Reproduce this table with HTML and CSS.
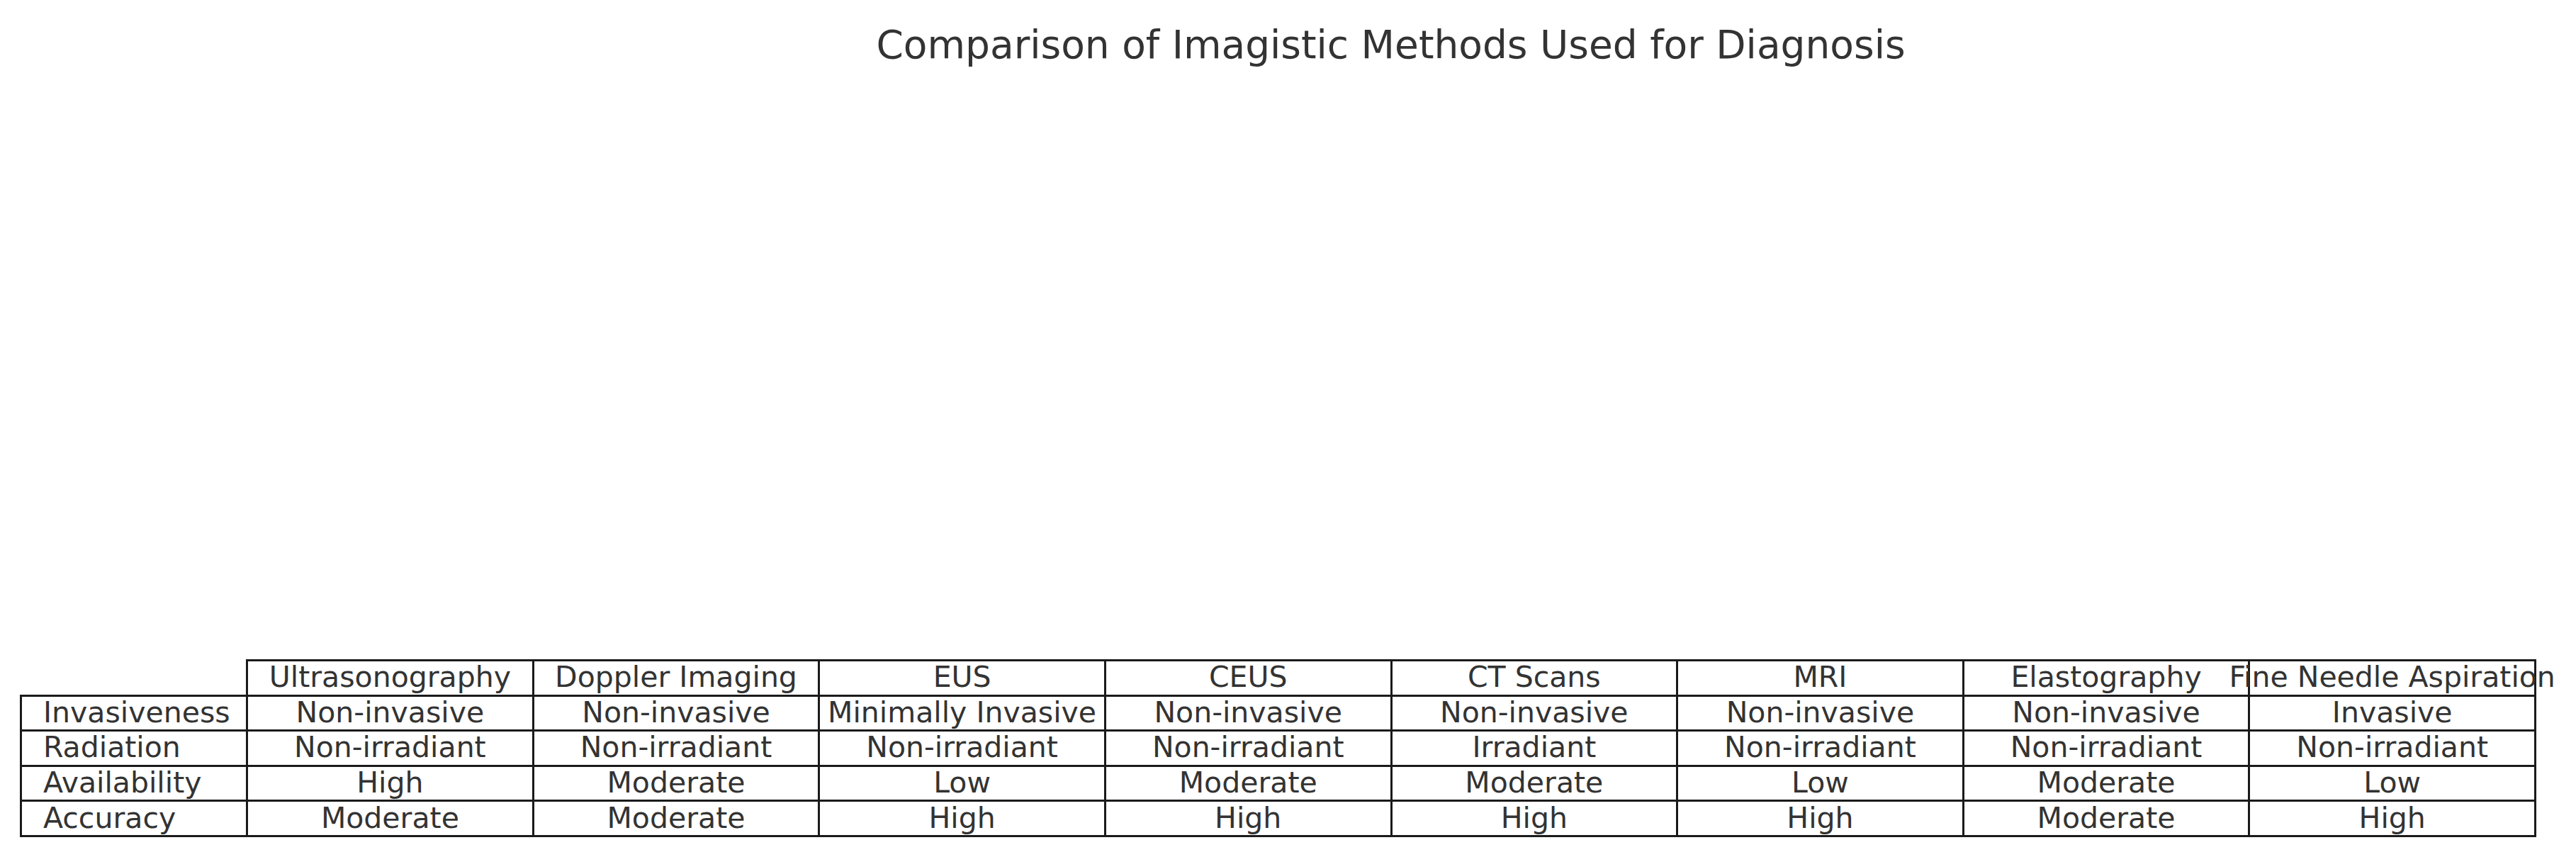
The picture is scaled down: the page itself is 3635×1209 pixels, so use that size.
FILE: index.html
```html
<!DOCTYPE html>
<html lang="en">
<head>
<meta charset="utf-8">
<title>Comparison of Imagistic Methods Used for Diagnosis</title>
<link rel="stylesheet" href="styles.css">
</head>
<body>
<div class="figure">
  <h1 class="title">Comparison of Imagistic Methods Used for Diagnosis</h1>
  <div class="plot-area"></div>
  <table class="data-table">
    <colgroup>
      <col class="label-col">
      <col class="data-col"><col class="data-col"><col class="data-col"><col class="data-col">
      <col class="data-col"><col class="data-col"><col class="data-col"><col class="data-col">
    </colgroup>
    <tr class="head-row">
      <td class="corner"></td>
      <td><div class="c">Ultrasonography</div></td>
      <td><div class="c">Doppler Imaging</div></td>
      <td><div class="c">EUS</div></td>
      <td><div class="c">CEUS</div></td>
      <td><div class="c">CT Scans</div></td>
      <td><div class="c">MRI</div></td>
      <td><div class="c">Elastography</div></td>
      <td><div class="c">Fine Needle Aspiration</div></td>
    </tr>
    <tr>
      <td class="row-label"><div class="l">Invasiveness</div></td>
      <td><div class="c">Non-invasive</div></td>
      <td><div class="c">Non-invasive</div></td>
      <td><div class="c">Minimally Invasive</div></td>
      <td><div class="c">Non-invasive</div></td>
      <td><div class="c">Non-invasive</div></td>
      <td><div class="c">Non-invasive</div></td>
      <td><div class="c">Non-invasive</div></td>
      <td><div class="c">Invasive</div></td>
    </tr>
    <tr>
      <td class="row-label"><div class="l">Radiation</div></td>
      <td><div class="c">Non-irradiant</div></td>
      <td><div class="c">Non-irradiant</div></td>
      <td><div class="c">Non-irradiant</div></td>
      <td><div class="c">Non-irradiant</div></td>
      <td><div class="c">Irradiant</div></td>
      <td><div class="c">Non-irradiant</div></td>
      <td><div class="c">Non-irradiant</div></td>
      <td><div class="c">Non-irradiant</div></td>
    </tr>
    <tr>
      <td class="row-label"><div class="l">Availability</div></td>
      <td><div class="c">High</div></td>
      <td><div class="c">Moderate</div></td>
      <td><div class="c">Low</div></td>
      <td><div class="c">Moderate</div></td>
      <td><div class="c">Moderate</div></td>
      <td><div class="c">Low</div></td>
      <td><div class="c">Moderate</div></td>
      <td><div class="c">Low</div></td>
    </tr>
    <tr>
      <td class="row-label"><div class="l">Accuracy</div></td>
      <td><div class="c">Moderate</div></td>
      <td><div class="c">Moderate</div></td>
      <td><div class="c">High</div></td>
      <td><div class="c">High</div></td>
      <td><div class="c">High</div></td>
      <td><div class="c">High</div></td>
      <td><div class="c">Moderate</div></td>
      <td><div class="c">High</div></td>
    </tr>
  </table>
</div>
</body>
</html>
```
FILE: styles.css
```css
html, body {
  margin: 0;
  padding: 0;
  background: #ffffff;
}
body {
  font-family: "DejaVu Sans", "Liberation Sans", sans-serif;
  color: #333333;
}
.figure {
  width: 3635px;
  height: 1209px;
  display: flex;
  flex-direction: column;
}
.title {
  margin: 0;
  padding-top: 31px;
  padding-left: 290px;
  font-size: 55px;
  font-weight: normal;
  line-height: 64px;
  text-align: center;
  white-space: nowrap;
}
.plot-area {
  height: 835px;
  flex: none;
}
.data-table {
  margin-left: 28px;
  border-collapse: collapse;
  table-layout: fixed;
  width: 3551px;
  font-size: 41px;
}
.label-col { width: 319px; }
.data-col { width: 403.5px; }
.data-table tr {
  height: 49.6px;
}
.data-table td {
  border: 3px solid #1a1a1a;
  padding: 0;
  overflow: visible;
  white-space: nowrap;
}
.data-table td.corner {
  border: none;
}
.c {
  display: flex;
  justify-content: center;
  line-height: 44px;
  padding-bottom: 2px;
}
.l {
  display: flex;
  justify-content: flex-start;
  padding-left: 30px;
  line-height: 44px;
  padding-bottom: 2px;
}
```
